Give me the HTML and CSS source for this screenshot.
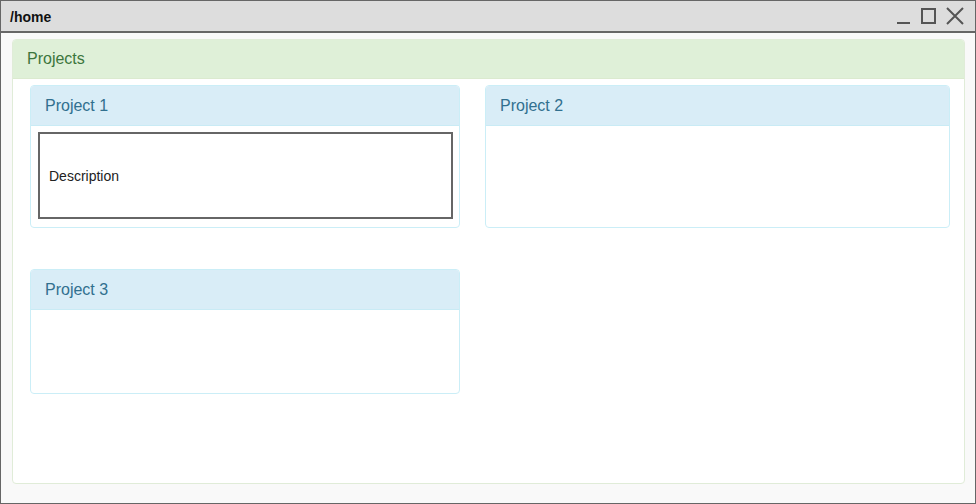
FILE: index.html
```html
<!DOCTYPE html>
<html>
<head>
<meta charset="utf-8">
<link rel="stylesheet" href="styles.css">
</head>
<body>
<div class="window">
  <div class="titlebar">
    <span class="title">/home</span>
    <div class="controls">
      <svg width="16" height="18" viewBox="0 0 16 18"><line x1="0" y1="16" x2="13" y2="16" stroke="#555" stroke-width="2"/></svg>
      <svg width="18" height="18" viewBox="0 0 18 18"><rect x="2" y="2" width="13" height="14" fill="none" stroke="#555" stroke-width="2"/></svg>
      <svg width="20" height="20" viewBox="0 0 20 20"><path d="M2 2 L18 18 M18 2 L2 18" stroke="#555" stroke-width="2" fill="none"/></svg>
    </div>
  </div>
  <div class="content">
    <div class="panel panel-success">
      <div class="panel-heading">Projects</div>
      <div class="panel-body">
        <div class="grid">
          <div class="card">
            <div class="card-heading">Project 1</div>
            <div class="card-body">
              <div class="desc">Description</div>
            </div>
          </div>
          <div class="card">
            <div class="card-heading">Project 2</div>
            <div class="card-body"></div>
          </div>
          <div class="card short">
            <div class="card-heading">Project 3</div>
            <div class="card-body"></div>
          </div>
        </div>
      </div>
    </div>
  </div>
</div>
</body>
</html>
```
FILE: styles.css
```css
* { box-sizing: border-box; }
html, body { margin: 0; padding: 0; }
body {
  font-family: "Liberation Sans", Arial, sans-serif;
  background: #fff;
}
.window {
  width: 976px;
  height: 504px;
  border: 1px solid #666;
  background: #f9f9f9;
  display: flex;
  flex-direction: column;
}
.titlebar {
  height: 32px;
  background: #dddddd;
  border-bottom: 2px solid #666;
  display: flex;
  align-items: center;
  justify-content: space-between;
  padding: 2px 10px 0 9px;
  flex-shrink: 0;
}
.title {
  font-weight: bold;
  font-size: 14px;
  color: #111;
}
.controls {
  display: flex;
  align-items: center;
  gap: 7px;
  margin-top: -2px;
}
.controls svg { display: block; }
.content {
  padding: 6px 10px 0 11px;
}
.panel {
  height: 445px;
  background: #fff;
  border: 1px solid #e0ecd8;
  border-radius: 4px;
  overflow: hidden;
}
.panel-heading {
  height: 39px;
  background: #dff0d8;
  color: #3c763d;
  border-bottom: 1px solid #dbeacf;
  font-size: 16px;
  line-height: 38px;
  padding-left: 14px;
}
.panel-body {
  padding: 6px 15px 0 17px;
}
.grid {
  display: grid;
  grid-template-columns: 430px 465px;
  column-gap: 25px;
  row-gap: 41px;
  align-items: start;
}
.card {
  height: 143px;
  border: 1px solid #cbeef7;
  border-radius: 4px;
  overflow: hidden;
  background: #fff;
}
.card.short { height: 125px; }
.card-heading {
  height: 40px;
  background: #d9edf7;
  color: #31708f;
  border-bottom: 1px solid #c9ebf5;
  font-size: 16px;
  line-height: 40px;
  padding-left: 14px;
}
.card-body {
  padding: 6px 6px 0 7px;
}
.desc {
  height: 87px;
  border: 2px solid #666;
  font-size: 14px;
  color: #222;
  display: flex;
  align-items: center;
  padding-left: 9px;
}
```
